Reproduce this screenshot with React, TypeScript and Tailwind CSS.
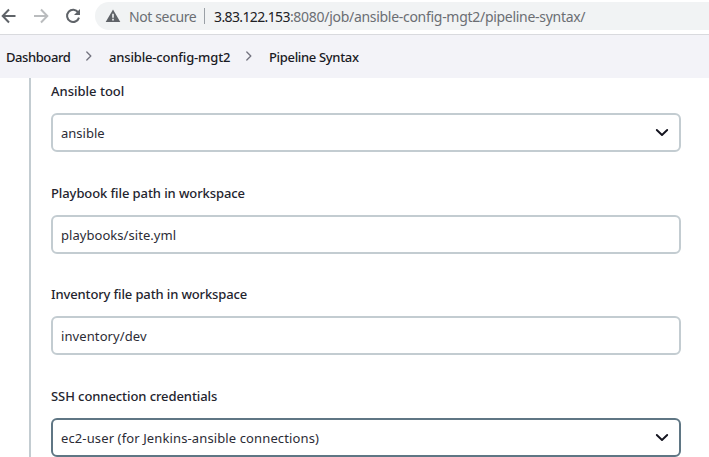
import React from "react";

function Chevron() {
  return (
    <svg width="14" height="9" viewBox="0 0 14 9" fill="none" stroke="#14141f" strokeWidth="1.9" strokeLinecap="round" strokeLinejoin="round">
      <path d="M1.8 2 7 7l5.2-5" />
    </svg>
  );
}

function Separator({ className }: { className: string }) {
  return (
    <svg className={className} width="6" height="10" viewBox="0 0 6 10" fill="none" stroke="#73737f" strokeWidth="1.3" strokeLinecap="round" strokeLinejoin="round">
      <path d="M.8 1l4 4-4 4" />
    </svg>
  );
}

type FieldProps = {
  label: string;
  labelClass: string;
  value: string;
  valueClass: string;
  select?: boolean;
  focused?: boolean;
};

function Field({ label, labelClass, value, valueClass, select, focused }: FieldProps) {
  return (
    <div className="flex flex-col">
      <div className={`h-5 leading-5 text-[13px] font-medium whitespace-nowrap text-[#24242e] ${labelClass}`}>{label}</div>
      <div className={`mt-3 flex h-[39px] w-[630px] items-center justify-between rounded-[6px] border-2 bg-white pl-2 pr-[10px] ${focused ? "border-[#5f7684]" : "border-[#c3ccd1]"}`}>
        <span className={`text-[13px] leading-5 whitespace-nowrap text-[#2c2c36] ${valueClass}`}>{value}</span>
        {select && <Chevron />}
      </div>
    </div>
  );
}

export default function App() {
  return (
    <div className="h-[457px] w-[709px] overflow-hidden bg-white font-['Noto_Sans','Open_Sans',sans-serif] text-[#1a1a24]">
      <header className="flex h-[34px] items-start">
        <div className="flex h-8 w-[95px] shrink-0 items-center">
          <svg width="95" height="32" viewBox="0 0 95 32" fill="none" strokeWidth="2">
            <path d="M15.5 16H3M9 9.5 2.7 16 9 22.5" stroke="#5f6368" />
            <path d="M34 16h12.5M41 9.5l6.3 6.5-6.3 6.5" stroke="#babcbe" />
            <path d="M78.2 12.4A6.1 6.1 0 1 0 79 17.6" stroke="#5f6368" />
            <path d="M80 9v6h-6z" fill="#5f6368" />
          </svg>
        </div>
        <div className="mt-0.5 flex h-7 flex-1 items-center rounded-l-full bg-[#f1f3f4] pl-[10px] text-[14px]">
          <svg width="16" height="14" viewBox="0 0 16 14">
            <path d="M8 .5 15.3 13H.7z" fill="#5f6368" />
            <path d="M7.2 4.7h1.6v4H7.2zM7.2 9.8h1.6v1.6H7.2z" fill="#f1f3f4" />
          </svg>
          <span className="ml-2 w-[75px] whitespace-nowrap tracking-[-0.38px] text-[#6b6e73]">Not secure</span>
          <span className="h-4 w-px bg-[#9aa0a6]" />
          <span className="ml-[9px] whitespace-nowrap tracking-[-0.29px] text-[#6b6e73]"><span className="tracking-[-0.62px] text-[#202124]">3.83.122.153</span>:8080/job/ansible-config-mgt2/pipeline-syntax/</span>
        </div>
      </header>
      <nav className="flex h-11 items-center border-t border-[#d9dade] bg-[#f3f3f8] pl-[6px] text-[13px] font-medium whitespace-nowrap">
        <span className="mt-0.5 w-[80px] tracking-[-0.42px]">Dashboard</span>
        <Separator className="mb-0.5 shrink-0" />
        <span className="mt-0.5 ml-[17px] w-[137px] tracking-[-0.16px]">ansible-config-mgt2</span>
        <Separator className="mb-0.5 shrink-0" />
        <span className="mt-0.5 ml-[17px] tracking-[-0.33px]">Pipeline Syntax</span>
      </nav>
      <main className="ml-[29px] flex h-[379px] flex-col border-l-2 border-[#c3ccd1] pl-5 pt-[3px]">
        <Field label="Ansible tool" labelClass="" value="ansible" valueClass="" select />
        <div className="h-[31px] shrink-0" />
        <Field label="Playbook file path in workspace" labelClass="tracking-[-0.09px]" value="playbooks/site.yml" valueClass="tracking-[0.05px]" />
        <div className="h-[30px] shrink-0" />
        <Field label="Inventory file path in workspace" labelClass="tracking-[-0.13px]" value="inventory/dev" valueClass="tracking-[0.1px]" />
        <div className="h-[31px] shrink-0" />
        <Field label="SSH connection credentials" labelClass="tracking-[-0.08px]" value="ec2-user (for Jenkins-ansible connections)" valueClass="tracking-[0.12px]" select focused />
      </main>
    </div>
  );
}
